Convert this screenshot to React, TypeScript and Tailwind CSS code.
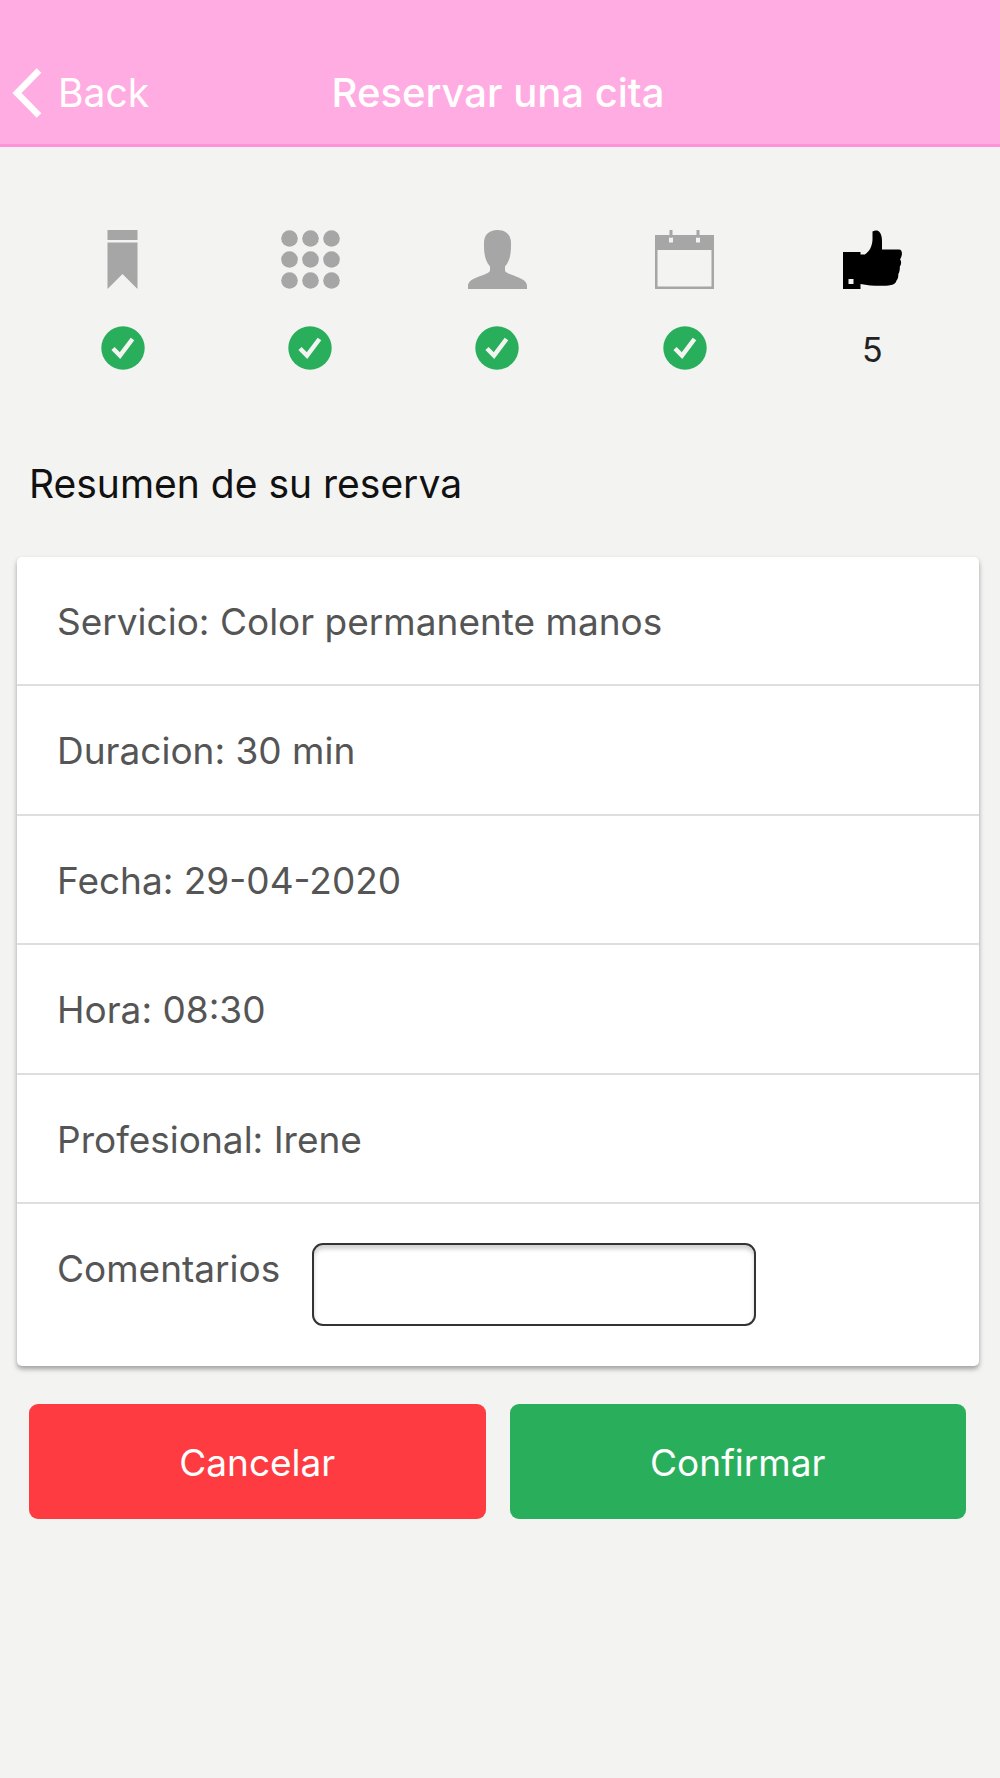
import React, { useState } from 'react';

interface IconProps {
  className?: string;
}

interface Step {
  label: string;
  icon: React.FC<IconProps>;
  done: boolean;
}

const BackIcon: React.FC<IconProps> = ({ className }) => (
  <svg className={className} viewBox="0 0 30 50" fill="none" stroke="currentColor" strokeWidth="6.5" aria-hidden="true">
    <path d="M27 2.5 5 25l22 22.5" />
  </svg>
);

const BookmarkIcon: React.FC<IconProps> = ({ className }) => (
  <svg className={className} viewBox="0 0 59 59" fill="currentColor" aria-hidden="true">
    <path d="M14.5 0h30v10h-30zM14.5 12.5h30V59l-15-15-15 15z" />
  </svg>
);

const DOTS = [8.5, 29.5, 50.5];

const GridIcon: React.FC<IconProps> = ({ className }) => (
  <svg className={className} viewBox="0 0 59 59" fill="currentColor" aria-hidden="true">
    {DOTS.map((cy) => DOTS.map((cx) => <circle key={`${cx}-${cy}`} cx={cx} cy={cy} r="8.3" />))}
  </svg>
);

const PersonIcon: React.FC<IconProps> = ({ className }) => (
  <svg className={className} viewBox="0 0 59 59" fill="currentColor" aria-hidden="true">
    <path d="M29.5 0C38 0 43 5 43 13c0 4 0 8-.6 11-.7 5-2.4 9-5.4 12.5V41c2 2.5 6 3.5 11 5.500 7 2.700 11 5 11 9.500v3H0v-3c0-4.500 4-6.800 11-9.500 5-2 9-3 11-5.500v-4.500c-3-3.500-4.700-7.500-5.400-12.500-.6-3-.6-7-.6-11C16 5 21 0 29.500 0z" />
  </svg>
);

const CalendarIcon: React.FC<IconProps> = ({ className }) => (
  <svg className={className} viewBox="0 0 59 59" fill="currentColor" aria-hidden="true">
    <path fillRule="evenodd" d="M0 5h59v54H0zM2.5 20v36.5h54V20zM14 7.5v5h4v-5zM41 7.5v5h4v-5z" />
    <path d="M14.5 0h3v7.5h-3zM41.5 0h3v7.5h-3z" />
  </svg>
);

const ThumbIcon: React.FC<IconProps> = ({ className }) => (
  <svg className={className} viewBox="0 0 59 59" fill="currentColor" aria-hidden="true">
    <path
      fillRule="evenodd"
      d="M0 22h17.5v2.5H22c5-3.5 7-8.500 7.500-14.500V1.500C31.500 0 35 0 36 1.500c2.500 2.500 3 6 3 10v8H56c3 0 3.500 4 2.500 6.500-.3 1.500-1 2.500-1.500 3.500 1.500 1 1.500 5-.2 7 .2 3-.3 5.500-1.500 7.500.2 3-.6 5-1.800 6.500-.5 2.500-2.500 4-5.500 4.500-8 1.500-20 1-30.500-1v5H0zM5.500 49v5h5v-5z"
    />
  </svg>
);

const CheckIcon: React.FC<IconProps> = ({ className }) => (
  <svg className={className} viewBox="0 0 44 44" fill="none" role="img" aria-label="Completado">
    <circle cx="22" cy="22" r="21.7" fill="#29af5c" />
    <path d="m12 22.5 7 7 12.500-16.500" stroke="#f3f3f1" strokeWidth="4.5" />
  </svg>
);

const steps: Step[] = [
  { label: 'Servicio', icon: BookmarkIcon, done: true },
  { label: 'Opciones', icon: GridIcon, done: true },
  { label: 'Profesional', icon: PersonIcon, done: true },
  { label: 'Fecha', icon: CalendarIcon, done: true },
  { label: 'Confirmar', icon: ThumbIcon, done: false },
];

const summary = [
  'Servicio: Color permanente manos',
  'Duracion: 30 min',
  'Fecha: 29-04-2020',
  'Hora: 08:30',
  'Profesional: Irene',
];

const Header: React.FC = () => (
  <header className="grid grid-cols-[1fr_auto_1fr] items-center h-[147px] pt-[42px] pl-3 pr-4 bg-[#fface3] border-b-3 border-[#ff93d8] text-white">
    <button type="button" className="flex items-center gap-4 justify-self-start text-[39px] leading-[48px]">
      <BackIcon className="w-[30px] h-[50px]" />
      Back
    </button>
    <h1 className="text-[40px] leading-[48px] font-medium">Reservar una cita</h1>
  </header>
);

const Steps: React.FC = () => (
  <ol className="grid grid-cols-5 pl-[29px] pr-[34px] pt-[83px]">
    {steps.map(({ label, icon: Icon, done }, index) => (
      <li key={label} className="flex flex-col items-center gap-[37px]">
        <Icon className={done ? 'size-[59px] text-[#a6a6a6]' : 'size-[59px] text-black'} />
        {done ? (
          <CheckIcon className="size-11" />
        ) : (
          <span className="text-[34px] leading-[48px] text-[#222]">{index + 1}</span>
        )}
      </li>
    ))}
  </ol>
);

const App: React.FC = () => {
  const [comments, setComments] = useState('');

  return (
    <div className="min-h-screen bg-[#f3f3f1] font-['Inter','Liberation_Sans',sans-serif]">
      <Header />
      <main>
        <Steps />
        <h2 className="pl-[29px] pt-[86px] text-[39px] leading-[48px] text-[#111]">Resumen de su reserva</h2>

        <section className="mt-[49px] ml-[17px] mr-[21px] rounded-[5px] bg-white shadow-[0_3px_5px_rgba(0,0,0,0.35)] text-[37px] leading-[48px] text-[#555]">
          <ul>
            {summary.map((line) => (
              <li key={line} className="h-[129px] even:h-[130px] px-10 pt-[41px] border-b-2 border-[#dedede]">
                {line}
              </li>
            ))}
          </ul>
          <div className="flex items-start gap-8 h-[162px] pl-10 pt-[39px]">
            <label htmlFor="comments" className="pt-0.5">Comentarios</label>
            <input
              id="comments"
              type="text"
              value={comments}
              onChange={(e) => setComments(e.target.value)}
              className="w-[444px] h-[83px] px-4 rounded-[11px] border-2 border-[#333] bg-white shadow-[inset_0_4px_4px_rgba(0,0,0,0.18)]"
            />
          </div>
        </section>

        <div className="grid grid-cols-2 gap-6 mt-[38px] pl-[29px] pr-[34px] text-[37px] leading-[48px] text-white">
          <button type="button" className="h-[115px] pt-0.5 rounded-[9px] bg-[#ff3b42]">
            Cancelar
          </button>
          <button type="button" className="h-[115px] pt-0.5 rounded-[9px] bg-[#29af5c]">
            Confirmar
          </button>
        </div>
      </main>
    </div>
  );
};

export default App;
